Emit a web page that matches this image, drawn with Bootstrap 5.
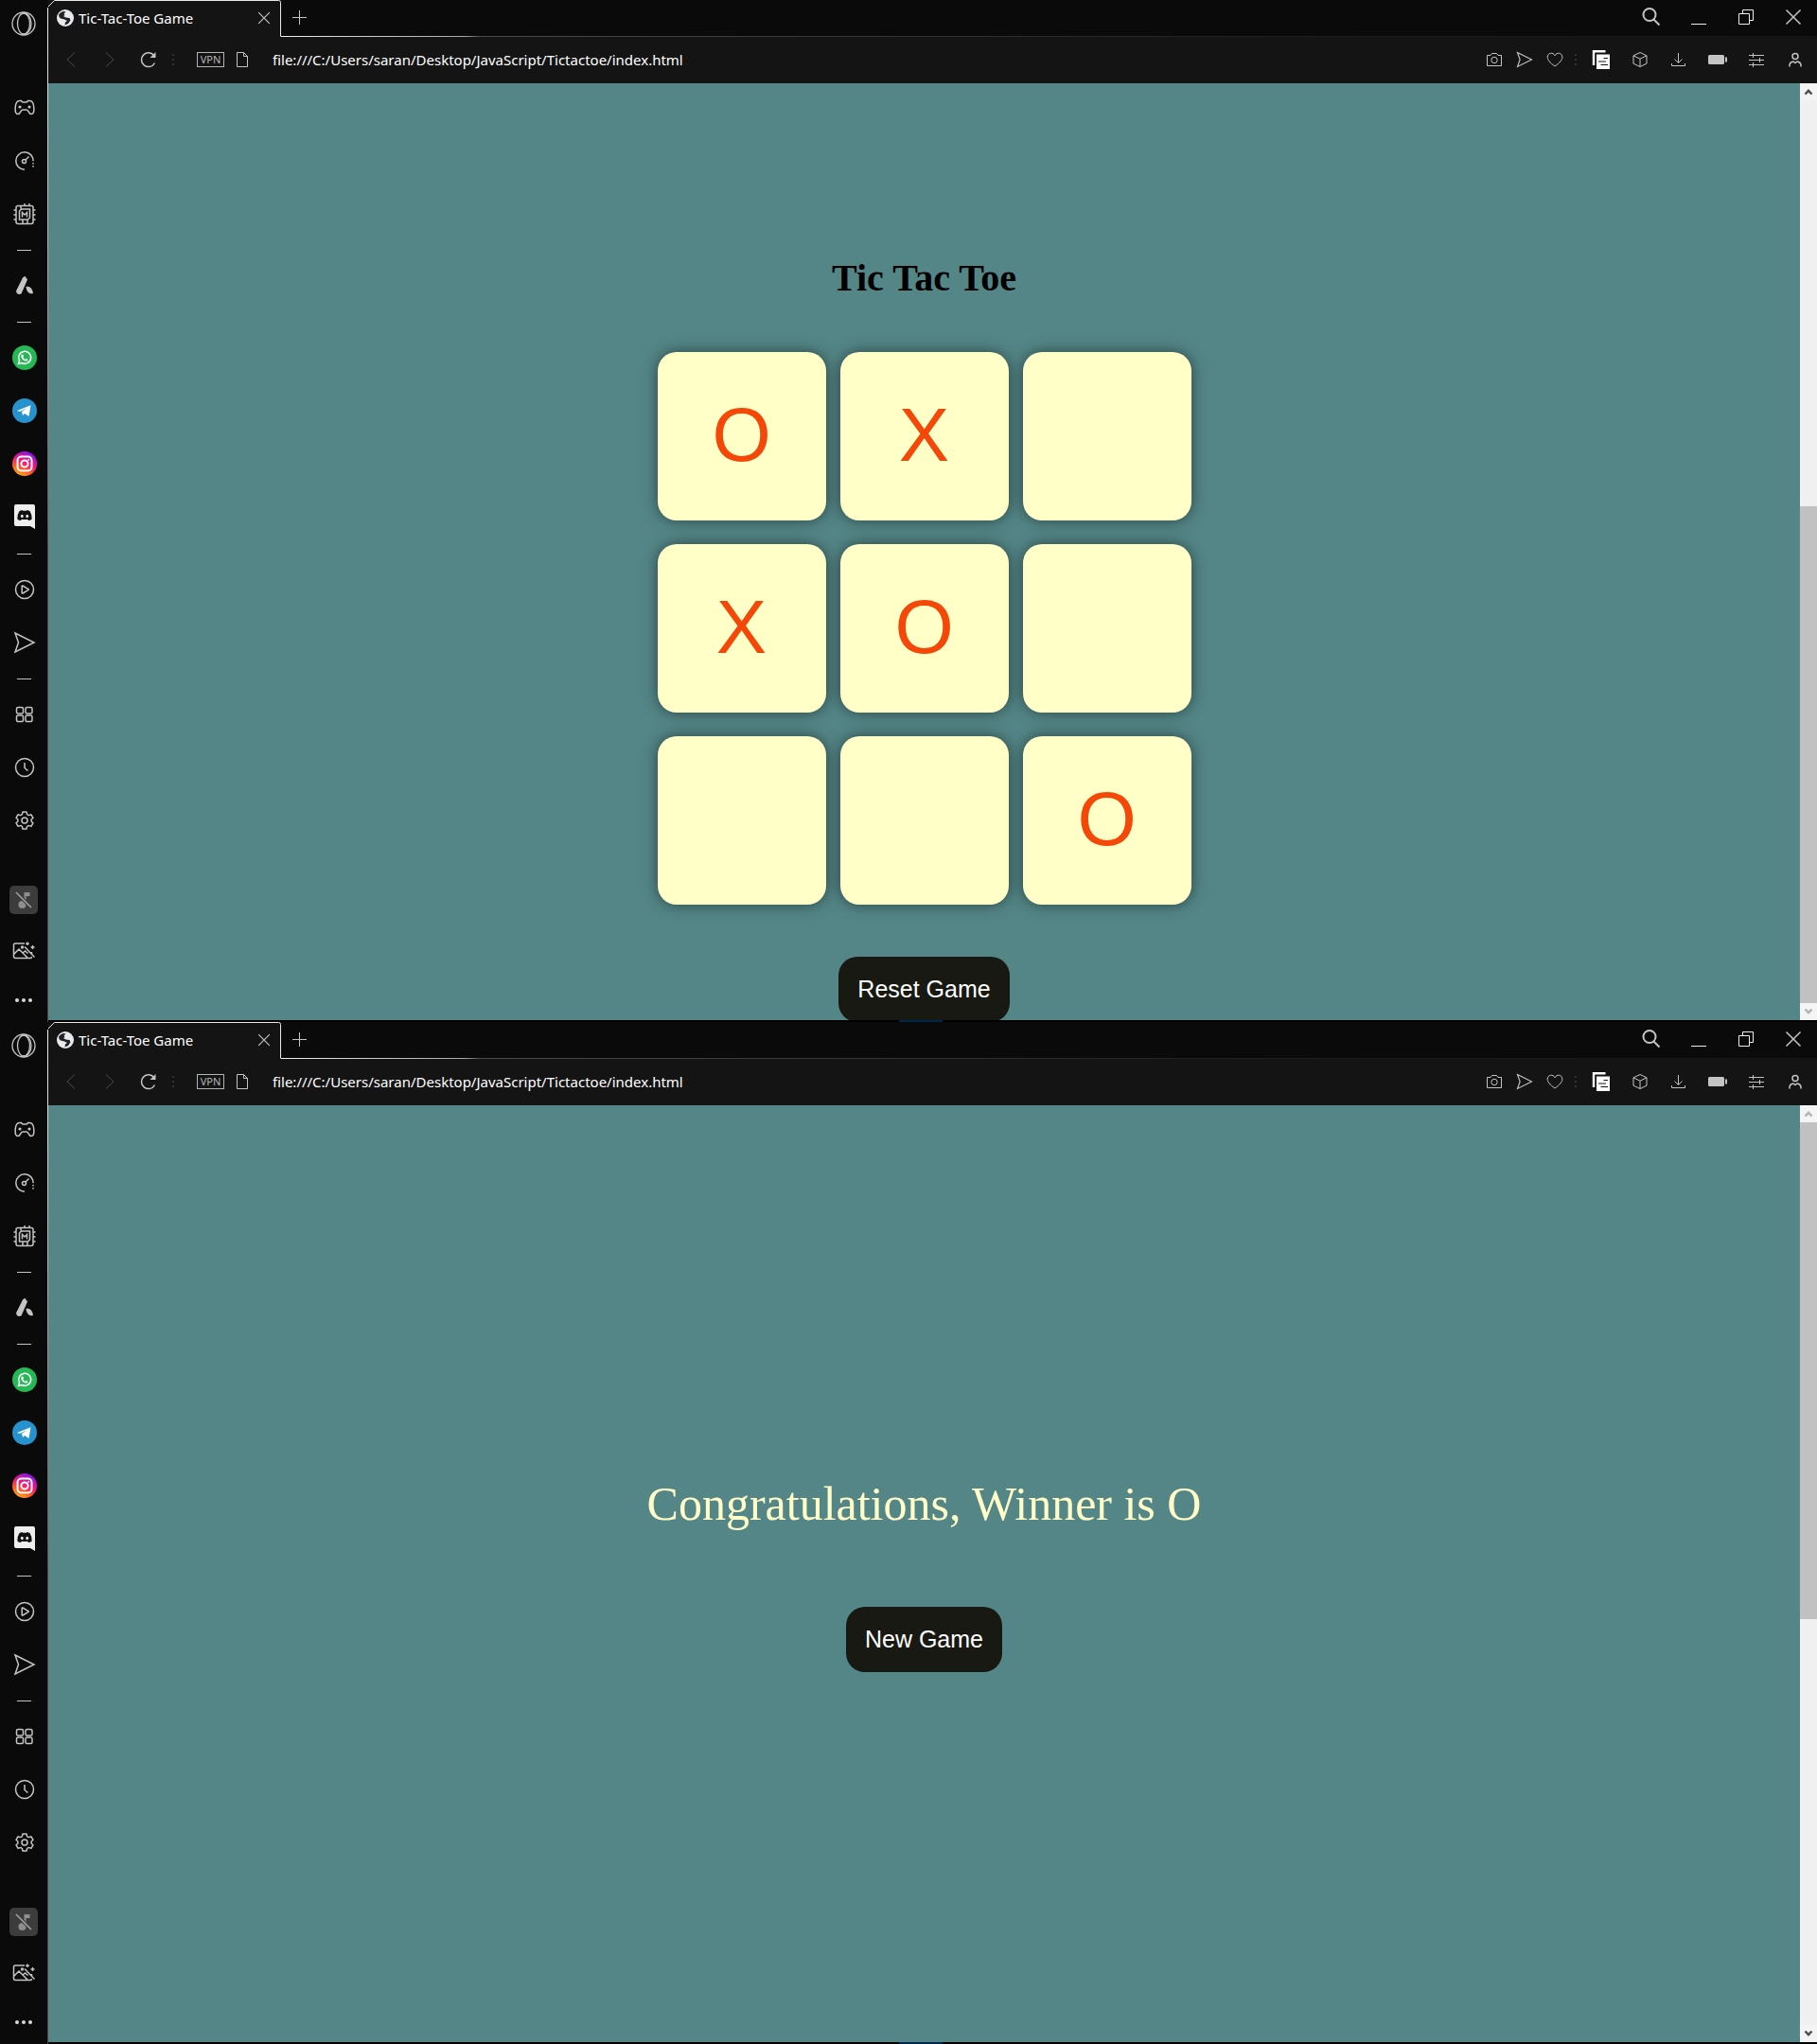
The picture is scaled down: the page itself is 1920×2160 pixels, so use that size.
<!DOCTYPE html>
<html lang="en">
<head>
<meta charset="utf-8">
<meta name="viewport" content="width=device-width, initial-scale=1">
<title>Tic-Tac-Toe Game</title>
<link href="https://cdn.jsdelivr.net/npm/bootstrap@5.3.0/dist/css/bootstrap.min.css" rel="stylesheet">
<style>
  body { background: #0a0a0a; font-family: "Noto Sans", "Open Sans", sans-serif; }
  .screen { height: 50vh; background: #0a0a0a; }
  svg { display: block; fill: none; stroke: #c4c4c4; stroke-width: 1.5; }
  .plain { background: none; border: 0; padding: 0; display: flex; align-items: center; justify-content: center; }

  .side { width: 50px; flex: none; padding-bottom: 1px; }
  .side .brand { width: 50px; height: 50px; margin-bottom: 36px; }
  .side .tool { width: 50px; height: 56px; flex: none; padding-left: 1px; }
  .side .rule { height: 20px; display: flex; align-items: center; justify-content: center; }
  .side .rule::before { content: ""; width: 15px; height: 1px; background: #c4c4c4; }
  .side .social { padding-bottom: 1px; }
  .side .low { gap: 8px; }
  .side .low .tool { height: 45px; padding-left: 0; }
  .side .muted-box { width: 30px; height: 30px; border-radius: 5px; background: #3c3c3c; }
  .edge { width: 1px; flex: none; margin-top: 8px; background: linear-gradient(#f2f2f2, #b0a8a8 25%, #4d4444 55%, #4d4444); }

  .tabs { height: 39px; flex: none; }
  .tab { width: 246px; background: #141414; padding: 0 0 2px 9px; gap: 5px; color: #fff; font-size: 15px; line-height: 20px; }
  .tab .outline { position: absolute; left: -1px; top: 0; stroke: #e8e8e8; stroke-width: 1; }
  .tab .plain { width: 36px; height: 37px; }
  .strip { border-bottom: 1px solid; border-image: linear-gradient(90deg, #f0f0f0, #a8a8a8 12%, #4a4a4a 13%, #1a1a1a 70%, #141414) 1; }
  .strip .plain { width: 50px; height: 36px; }
  .strip .plain.add { width: 38px; }
  .bar { height: 49px; flex: none; background: #141414; padding: 0 3px 2px; }
  .bar .nav-b { width: 41px; height: 46px; }
  .bar .act-b { width: 32px; height: 46px; }
  .bar .dots { width: 12px; display: flex; justify-content: center; }
  .vpn { width: 29px; height: 16px; border: 1px solid #b4b4b4; color: #b4b4b4; font-size: 11px; line-height: 14px; text-align: center; margin: 0 12px 0 19px; }
  .address { background: none; border: 0; outline: 0; color: #fff; font-size: 15px; line-height: 20px; height: 30px; padding: 0; margin-left: 25px; }

  .site { background: #548687; }
  .scroll { width: 18px; flex: none; background: #f0f0f0; }
  .scroll .plain { height: 18px; flex: none; background: #f4f4f4; }
  .scroll .thumb { height: 55%; background: #c1c1c1; }
  .scroll svg { stroke: #505050; stroke-width: 2.5; }
  .scroll :disabled svg { stroke: #b4b4b4; }
  .foot { height: 2px; flex: none; background: #000; }
  .foot::before { content: ""; display: block; width: 46px; height: 2px; margin-left: 899px; background: #00284d; }

  .game { padding-top: 180px; }
  .game h1 { font: bold 40px/52px "Liberation Serif", serif; color: #000; margin: 0 0 52px; }
  .board { display: grid; grid-template-columns: repeat(3, 178px); gap: 25px 15px; margin-bottom: 55px; }
  .cell { height: 178px; border: 0; border-radius: 20px; background: #ffffc7; color: #f44708; box-shadow: 0 0 16px rgba(0, 0, 0, .5); font: 80px/92px "Liberation Sans", Arial, sans-serif; padding: 0 0 2px; }
  .action { font: 25px/29px "Liberation Sans", Arial, sans-serif; color: #fff; background: #191913; border: 0; border-radius: 20px; padding: 20px; }
  .result { gap: 80px; }
  .result p { font: 50px/58px "Liberation Serif", serif; color: #ffffc7; margin: 0; }
</style>
<script src="https://cdn.jsdelivr.net/npm/bootstrap@5.3.0/dist/js/bootstrap.bundle.min.js"></script>
</head>
<body>
<svg width="0" height="0" class="position-absolute" aria-hidden="true">
  <defs>
    <linearGradient id="insta" x1="0.1" y1="1" x2=".6" y2="0"><stop offset="0" stop-color="#ffc02c"/><stop offset=".3" stop-color="#ff6a1c"/><stop offset=".6" stop-color="#f2187a"/><stop offset="1" stop-color="#8a16e8"/></linearGradient>
  </defs>
  <symbol id="opera" viewBox="0 0 26 26"><g stroke-width="1.300"><circle cx="13" cy="13" r="12"/><ellipse cx="13" cy="13" rx="6.500" ry="11"/><path d="M12 1.500c5.500 0 9 5 9 11.500s-3.500 11.500-9 11.500"/></g></symbol>
  <symbol id="pad" viewBox="0 0 22 18"><path d="M5.500 1.500h2q1 1.500 2 1.500h3q1 0 2-1.500h2c3 0 4 3 4.300 7 .3 4.500-.3 7-2.800 7-3 0-2.500-4.500-5-4.500H9c-2.500 0-2 4.500-5 4.500-2.500 0-3.100-2.500-2.800-7 .3-4 1.300-7 4.300-7z"/><circle cx="6" cy="8" r=".8"/><circle cx="16" cy="8" r=".8"/></symbol>
  <symbol id="gauge" viewBox="0 0 22 22"><path d="M11 20.200a9.200 9.200 0 1 1 9.200-9"/><path d="M20 13v1.500M20 16v1.500"/><circle cx="10.500" cy="11.500" r="2"/><path d="M12 10l3.500-3.500"/></symbol>
  <symbol id="chip" viewBox="0 0 26 26"><rect x="4" y="4.500" width="18" height="19" rx="2"/><path d="M12 8h6.500v9l-2 2H7.500V10l2-2zM1.500 9H4M1.500 14H4M1.500 19H4M22 9h2.500M22 14h2.500M22 19h2.500M9 4.500v3M13 2v2.500M18 2v2.500M11 19v4M16 19v4M10.500 16.500v-5l2.500 2.500 2.500-2.500v5"/></symbol>
  <symbol id="aria" viewBox="0 0 22 22"><path d="M11.500 1l2.500 3.500L7.500 19.500q-5 1.500-5.500-3L9 2.500q1-1.500 2.500-1.500zM12.500 12c4-1 7 2 7.500 7-4 1.500-7-2-7.500-7z" fill="#c4c4c4" stroke="none"/></symbol>
  <symbol id="whats" viewBox="0 0 26 26"><circle cx="13" cy="13" r="13" fill="#25b955" stroke="none"/><path d="M6.500 19.500l1-3.500a6.500 6.500 0 1 1 2.500 2.500z" stroke="#fff"/><path d="M10.200 9.500l1.300.3.600 1.700-.7.900c.5 1.200 1.200 1.900 2.400 2.400l.9-.8 1.700.8c.2 1.700-1.400 2-2.500 1.700-2.500-.6-4.300-2.700-4.600-4.800-.1-1 .3-1.800.9-2.200z" fill="#fff" stroke="none"/></symbol>
  <symbol id="tele" viewBox="0 0 26 26"><circle cx="13" cy="13" r="13" fill="#2692ce" stroke="none"/><path d="M5 13L19.500 7.200 17.500 19l-4.500-3-2 2-1-4 6-4-8 4z" fill="#fff" stroke="none"/></symbol>
  <symbol id="insta-i" viewBox="0 0 26 26"><circle cx="13" cy="13" r="13" fill="url(#insta)" stroke="none"/><g stroke="#fff" stroke-width="2"><rect x="5.500" y="5.500" width="15" height="15" rx="4"/><circle cx="13" cy="13" r="3.600"/></g><circle cx="17.300" cy="8.700" r="1" fill="#fff" stroke="none"/></symbol>
  <symbol id="disc" viewBox="0 0 24 26"><path d="M3 0h18q2 0 2 2v24l-5-3H3q-2 0-2-2V2q0-2 2-2z" fill="#eee" stroke="none"/><path d="M6.500 7l3-1 .5.800h4l.5-.8 3 1q2.500 4 2.200 8.500-1.700 1.500-3.700 1.500l-1-1.200q-3 .6-6 0l-1 1.200q-2 0-3.700-1.500Q4 11 6.500 7z" fill="#111" stroke="none"/><g fill="#eee" stroke="none"><ellipse cx="9.300" cy="12.400" rx="1.400" ry="1.600"/><ellipse cx="14.700" cy="12.400" rx="1.400" ry="1.600"/></g></symbol>
  <symbol id="play" viewBox="0 0 22 22"><circle cx="11" cy="11" r="9.500"/><path d="M8.200 7.500q0-.8.800-.5l6 3.500q.6.500 0 1l-6 3.500q-.8.300-.8-.5z"/></symbol>
  <symbol id="send" viewBox="0 0 24 24"><path d="M2 2l20 10L2 22l3.500-10z"/></symbol>
  <symbol id="grid4" viewBox="0 0 20 18"><rect x="1.500" y="1.500" width="7" height="6.500" rx="1.500"/><rect x="11" y="1.500" width="7" height="6.500" rx="1.500"/><rect x="1.500" y="10" width="7" height="6.500" rx="1.500"/><rect x="11" y="10" width="7" height="6.500" rx="1.500"/></symbol>
  <symbol id="clock" viewBox="0 0 22 22"><circle cx="11" cy="11" r="9.500"/><path d="M11 6v5.500l3.500 3"/></symbol>
  <symbol id="gear" viewBox="0 0 22 22"><path d="M9 2h4l.6 2.600 1.800 1 2.600-.8 2 3.500-1.900 1.700v2l1.900 1.700-2 3.500-2.600-.8-1.800 1L13 20H9l-.6-2.600-1.800-1-2.600.8-2-3.500L3.900 12v-2L2 8.300l2-3.500 2.600.8 1.800-1z" stroke-linejoin="round"/><circle cx="11" cy="11" r="3"/></symbol>
  <symbol id="mute" viewBox="0 0 22 22"><g fill="#8e8e8e" stroke="none"><circle cx="9.500" cy="16" r="4"/><path d="M11.500 3h6v4h-4v9h-2z"/></g><path d="M3 3l16 16" stroke="#3c3c3c" stroke-width="3.500"/><path d="M3 3l16 16" stroke="#a4a4a4"/></symbol>
  <symbol id="pic" viewBox="0 0 24 22"><path d="M13 4H3q-1.500 0-1.500 1.500v12Q1.500 19.500 3 19.500h16q1.500 0 1.500-1.500M20.500 13v2M2 15l5-5 9 9M11 14l2.500-2 3 2.500M13 7.500L23.500 18.500M16 2.500v3.500M14.200 4.200h3.600M21.500 6v4M19.500 8h4"/><circle cx="10.500" cy="8" r="1"/></symbol>
  <symbol id="more" viewBox="0 0 20 6"><g fill="#d8d8d8" stroke="none"><circle cx="3" cy="3" r="2"/><circle cx="10" cy="3" r="2"/><circle cx="17" cy="3" r="2"/></g></symbol>
  <symbol id="globe" viewBox="0 0 18 18"><circle cx="9" cy="9" r="9" fill="#e8eaed" stroke="none"/><path d="M2 5.500q1.500-2.500 4.500-3.500l3 .5-2 2 1 1.500-1.500 1 2.500 1.500 4 .5 1 2.500-2.500 3.500-3.500 1.500.5-3 2-1.500-3-1.500L4 9.500 2.500 8z" fill="#202124" stroke="none"/></symbol>
  <symbol id="cross" viewBox="0 0 18 18"><path d="M1.500 1.500l15 15M16.500 1.500l-15 15"/></symbol>
  <symbol id="plus" viewBox="0 0 16 16"><path d="M8.500 1v15M1 8.500h15" stroke-width="1"/></symbol>
  <symbol id="find" viewBox="0 0 20 20"><circle cx="8" cy="7.500" r="6.500" stroke-width="2"/><path d="M12.500 12.500l6 6" stroke-width="2"/></symbol>
  <symbol id="mini" viewBox="0 0 18 18"><path d="M1 16.500h16" stroke="#eee" stroke-width="1"/></symbol>
  <symbol id="rest" viewBox="0 0 18 18"><path d="M1.500 5.500h11v11h-11zM5.500 5.500v-4h11v11h-4" stroke="#eee" stroke-width="1"/></symbol>
  <symbol id="back" viewBox="0 0 12 18"><path d="M10 1.500L2 9l8 7.500" stroke="#4a4a4a" stroke-width="1"/></symbol>
  <symbol id="fwd" viewBox="0 0 12 18"><path d="M2 1.500L10 9l-8 7.500" stroke="#4a4a4a" stroke-width="1"/></symbol>
  <symbol id="reload" viewBox="0 0 18 18"><path d="M15.500 12.500A7.400 7.400 0 1 1 15 5"/><path d="M16.500 1v6h-6z" fill="#c4c4c4" stroke="none"/></symbol>
  <symbol id="sep" viewBox="0 0 4 14"><path d="M2 1v12" stroke="#3a3a3a" stroke-width="1.500" stroke-dasharray="2 3"/></symbol>
  <symbol id="page" viewBox="0 0 14 18"><path d="M1.500 1.500h7l4 4v11h-11zM8.500 1.500v4h4" stroke-width="1"/></symbol>
  <symbol id="cam" viewBox="0 0 18 16"><path d="M1.500 3.500H5l1.500-2h5l1.500 2h3.500v11h-15z" stroke-width="1"/><circle cx="9" cy="8.500" r="3.200" stroke-width="1"/></symbol>
  <symbol id="heart" viewBox="0 0 18 16"><path d="M9 15C4 11.500 1.200 8.500 1.200 5.200c0-4.500 6-5.500 7.800-1.400 1.800-4.100 7.800-3.100 7.800 1.400C16.800 8.500 14 11.500 9 15z" stroke-width="1"/></symbol>
  <symbol id="docs" viewBox="0 0 20 20"><path d="M2 16V1.200h12.500" stroke="#fff" stroke-width="2.400"/><path d="M5 4.500h14V20H5z" fill="#fff" stroke="none"/><path d="M12.500 8.500h4.500M7 12h8M9.500 15.500H17" stroke="#141414" stroke-width="1.200"/></symbol>
  <symbol id="cube" viewBox="0 0 18 18"><path d="M9 1.500l7 3.300v8.400l-7 3.300-7-3.300V4.800zM2 4.800l7 3.400 7-3.400M9 8.200v8.300" stroke-width="1"/></symbol>
  <symbol id="down" viewBox="0 0 18 16"><path d="M8.500 1v10M4.500 7.500l4 4 4-4M1.500 12v2.500h14V12" stroke-width="1"/></symbol>
  <symbol id="batt" viewBox="0 0 20 12"><path d="M1.500 1h14q1.500 0 1.500 1.500v7q0 1.500-1.500 1.500h-14Q0 11 0 9.500v-7Q0 1 1.500 1zM18 3.500h2v5h-2z" fill="#c4c4c4" stroke="none"/></symbol>
  <symbol id="tune" viewBox="0 0 18 16"><path d="M1 3.500h16M1 8.500h16M1 13.500h16M5.500 1v5M12.500 6v5M5.500 11v5" stroke-width="1"/></symbol>
  <symbol id="user" viewBox="0 0 16 16"><circle cx="8" cy="4.500" r="3"/><path d="M2 15.500v-2q.5-3 4-3.500l2 1.500L10 10q3.500.5 4 3.500v2"/></symbol>
  <symbol id="up" viewBox="0 0 10 8"><path d="M1.500 6.500L5 2.800l3.500 3.700"/></symbol>
  <symbol id="dn" viewBox="0 0 10 8"><path d="M1.500 1.500L5 5.200l3.500-3.700"/></symbol>
  <symbol id="edge-tab" viewBox="0 0 247 39"><path d="M.5 8v-.5l7-7h237q2 0 2 2v36"/></symbol>
</svg>

<main class="vh-100 overflow-hidden">
  <section class="screen d-flex overflow-hidden" aria-label="Game board window">
    <nav class="side d-flex flex-column" aria-label="Sidebar">
      <button class="plain brand" aria-label="Menu"><svg width="26" height="26"><use href="#opera"/></svg></button>
      <div>
        <button class="plain tool" aria-label="Corner"><svg width="22" height="18"><use href="#pad"/></svg></button>
        <button class="plain tool" aria-label="GX Control"><svg width="22" height="22"><use href="#gauge"/></svg></button>
        <button class="plain tool" aria-label="Mods"><svg width="26" height="26"><use href="#chip"/></svg></button>
      </div>
      <div class="rule"></div>
      <button class="plain tool" aria-label="Aria"><svg width="22" height="22"><use href="#aria"/></svg></button>
      <div class="rule"></div>
      <div class="social">
        <button class="plain tool" aria-label="WhatsApp"><svg width="26" height="26"><use href="#whats"/></svg></button>
        <button class="plain tool" aria-label="Telegram"><svg width="26" height="26"><use href="#tele"/></svg></button>
        <button class="plain tool" aria-label="Instagram"><svg width="26" height="26"><use href="#insta-i"/></svg></button>
        <button class="plain tool" aria-label="Discord"><svg width="24" height="26"><use href="#disc"/></svg></button>
      </div>
      <div class="rule"></div>
      <div>
        <button class="plain tool" aria-label="Player"><svg width="22" height="22"><use href="#play"/></svg></button>
        <button class="plain tool" aria-label="My Flow"><svg width="24" height="24"><use href="#send"/></svg></button>
      </div>
      <div class="rule"></div>
      <div>
        <button class="plain tool" aria-label="Speed Dial"><svg width="20" height="18"><use href="#grid4"/></svg></button>
        <button class="plain tool" aria-label="History"><svg width="22" height="22"><use href="#clock"/></svg></button>
        <button class="plain tool" aria-label="Settings"><svg width="22" height="22"><use href="#gear"/></svg></button>
      </div>
      <div class="low mt-auto d-flex flex-column">
        <button class="plain tool" aria-label="Music muted"><span class="plain muted-box"><svg width="22" height="22"><use href="#mute"/></svg></span></button>
        <button class="plain tool" aria-label="Wallpaper"><svg width="24" height="22"><use href="#pic"/></svg></button>
        <button class="plain tool" aria-label="More"><svg width="20" height="6"><use href="#more"/></svg></button>
      </div>
    </nav>
    <div class="edge"></div>
    <div class="flex-grow-1 d-flex flex-column overflow-hidden">
      <header class="tabs d-flex">
        <div class="tab position-relative d-flex align-items-center">
          <svg class="outline" width="247" height="39"><use href="#edge-tab"/></svg>
          <svg width="18" height="18"><use href="#globe"/></svg>
          <span class="flex-grow-1">Tic-Tac-Toe Game</span>
          <button class="plain" aria-label="Close tab"><svg width="14" height="14"><use href="#cross"/></svg></button>
        </div>
        <div class="strip flex-grow-1 d-flex">
          <button class="plain add me-auto" aria-label="New tab"><svg width="16" height="16"><use href="#plus"/></svg></button>
          <button class="plain" aria-label="Search tabs"><svg width="20" height="20"><use href="#find"/></svg></button>
          <button class="plain" aria-label="Minimize"><svg width="18" height="18"><use href="#mini"/></svg></button>
          <button class="plain" aria-label="Restore"><svg width="18" height="18"><use href="#rest"/></svg></button>
          <button class="plain" aria-label="Close window"><svg width="18" height="18"><use href="#cross"/></svg></button>
        </div>
      </header>
      <div class="bar d-flex align-items-center">
        <button class="plain nav-b" aria-label="Back"><svg width="12" height="18"><use href="#back"/></svg></button>
        <button class="plain nav-b" aria-label="Forward"><svg width="12" height="18"><use href="#fwd"/></svg></button>
        <button class="plain nav-b" aria-label="Reload"><svg width="18" height="18"><use href="#reload"/></svg></button>
        <span class="dots"><svg width="4" height="14"><use href="#sep"/></svg></span>
        <span class="vpn">VPN</span>
        <svg width="14" height="18"><use href="#page"/></svg>
        <input class="address flex-grow-1" type="text" aria-label="Address" value="file:///C:/Users/saran/Desktop/JavaScript/Tictactoe/index.html">
        <button class="plain act-b" aria-label="Snapshot"><svg width="18" height="16"><use href="#cam"/></svg></button>
        <button class="plain act-b" aria-label="Send to My Flow"><svg width="18" height="18"><use href="#send"/></svg></button>
        <button class="plain act-b" aria-label="Bookmark"><svg width="18" height="16"><use href="#heart"/></svg></button>
        <span class="dots"><svg width="4" height="14"><use href="#sep"/></svg></span>
        <button class="plain nav-b" aria-label="Reader extension"><svg width="20" height="20"><use href="#docs"/></svg></button>
        <button class="plain nav-b" aria-label="Extensions"><svg width="18" height="18"><use href="#cube"/></svg></button>
        <button class="plain nav-b" aria-label="Downloads"><svg width="18" height="16"><use href="#down"/></svg></button>
        <button class="plain nav-b" aria-label="Battery saver"><svg width="20" height="12"><use href="#batt"/></svg></button>
        <button class="plain nav-b" aria-label="Easy setup"><svg width="18" height="16"><use href="#tune"/></svg></button>
        <button class="plain nav-b" aria-label="Profile"><svg width="16" height="16"><use href="#user"/></svg></button>
      </div>
      <div class="d-flex flex-grow-1 overflow-hidden">
        <div class="site game flex-grow-1 d-flex flex-column align-items-center overflow-hidden">
          <h1>Tic Tac Toe</h1>
          <div class="board">
            <button class="cell">O</button><button class="cell">X</button><button class="cell" aria-label="Empty"></button>
            <button class="cell">X</button><button class="cell">O</button><button class="cell" aria-label="Empty"></button>
            <button class="cell" aria-label="Empty"></button><button class="cell" aria-label="Empty"></button><button class="cell">O</button>
          </div>
          <button class="action">Reset Game</button>
        </div>
        <div class="scroll d-flex flex-column">
          <button class="plain" aria-label="Scroll up"><svg width="10" height="8"><use href="#up"/></svg></button>
          <div class="flex-grow-1 d-flex flex-column justify-content-end"><div class="thumb"></div></div>
          <button class="plain" aria-label="Scroll down" disabled><svg width="10" height="8"><use href="#dn"/></svg></button>
        </div>
      </div>
      <div class="foot"></div>
    </div>
  </section>

  <section class="screen d-flex overflow-hidden" aria-label="Winner window">
    <nav class="side d-flex flex-column" aria-label="Sidebar">
      <button class="plain brand" aria-label="Menu"><svg width="26" height="26"><use href="#opera"/></svg></button>
      <div>
        <button class="plain tool" aria-label="Corner"><svg width="22" height="18"><use href="#pad"/></svg></button>
        <button class="plain tool" aria-label="GX Control"><svg width="22" height="22"><use href="#gauge"/></svg></button>
        <button class="plain tool" aria-label="Mods"><svg width="26" height="26"><use href="#chip"/></svg></button>
      </div>
      <div class="rule"></div>
      <button class="plain tool" aria-label="Aria"><svg width="22" height="22"><use href="#aria"/></svg></button>
      <div class="rule"></div>
      <div class="social">
        <button class="plain tool" aria-label="WhatsApp"><svg width="26" height="26"><use href="#whats"/></svg></button>
        <button class="plain tool" aria-label="Telegram"><svg width="26" height="26"><use href="#tele"/></svg></button>
        <button class="plain tool" aria-label="Instagram"><svg width="26" height="26"><use href="#insta-i"/></svg></button>
        <button class="plain tool" aria-label="Discord"><svg width="24" height="26"><use href="#disc"/></svg></button>
      </div>
      <div class="rule"></div>
      <div>
        <button class="plain tool" aria-label="Player"><svg width="22" height="22"><use href="#play"/></svg></button>
        <button class="plain tool" aria-label="My Flow"><svg width="24" height="24"><use href="#send"/></svg></button>
      </div>
      <div class="rule"></div>
      <div>
        <button class="plain tool" aria-label="Speed Dial"><svg width="20" height="18"><use href="#grid4"/></svg></button>
        <button class="plain tool" aria-label="History"><svg width="22" height="22"><use href="#clock"/></svg></button>
        <button class="plain tool" aria-label="Settings"><svg width="22" height="22"><use href="#gear"/></svg></button>
      </div>
      <div class="low mt-auto d-flex flex-column">
        <button class="plain tool" aria-label="Music muted"><span class="plain muted-box"><svg width="22" height="22"><use href="#mute"/></svg></span></button>
        <button class="plain tool" aria-label="Wallpaper"><svg width="24" height="22"><use href="#pic"/></svg></button>
        <button class="plain tool" aria-label="More"><svg width="20" height="6"><use href="#more"/></svg></button>
      </div>
    </nav>
    <div class="edge"></div>
    <div class="flex-grow-1 d-flex flex-column overflow-hidden">
      <header class="tabs d-flex">
        <div class="tab position-relative d-flex align-items-center">
          <svg class="outline" width="247" height="39"><use href="#edge-tab"/></svg>
          <svg width="18" height="18"><use href="#globe"/></svg>
          <span class="flex-grow-1">Tic-Tac-Toe Game</span>
          <button class="plain" aria-label="Close tab"><svg width="14" height="14"><use href="#cross"/></svg></button>
        </div>
        <div class="strip flex-grow-1 d-flex">
          <button class="plain add me-auto" aria-label="New tab"><svg width="16" height="16"><use href="#plus"/></svg></button>
          <button class="plain" aria-label="Search tabs"><svg width="20" height="20"><use href="#find"/></svg></button>
          <button class="plain" aria-label="Minimize"><svg width="18" height="18"><use href="#mini"/></svg></button>
          <button class="plain" aria-label="Restore"><svg width="18" height="18"><use href="#rest"/></svg></button>
          <button class="plain" aria-label="Close window"><svg width="18" height="18"><use href="#cross"/></svg></button>
        </div>
      </header>
      <div class="bar d-flex align-items-center">
        <button class="plain nav-b" aria-label="Back"><svg width="12" height="18"><use href="#back"/></svg></button>
        <button class="plain nav-b" aria-label="Forward"><svg width="12" height="18"><use href="#fwd"/></svg></button>
        <button class="plain nav-b" aria-label="Reload"><svg width="18" height="18"><use href="#reload"/></svg></button>
        <span class="dots"><svg width="4" height="14"><use href="#sep"/></svg></span>
        <span class="vpn">VPN</span>
        <svg width="14" height="18"><use href="#page"/></svg>
        <input class="address flex-grow-1" type="text" aria-label="Address" value="file:///C:/Users/saran/Desktop/JavaScript/Tictactoe/index.html">
        <button class="plain act-b" aria-label="Snapshot"><svg width="18" height="16"><use href="#cam"/></svg></button>
        <button class="plain act-b" aria-label="Send to My Flow"><svg width="18" height="18"><use href="#send"/></svg></button>
        <button class="plain act-b" aria-label="Bookmark"><svg width="18" height="16"><use href="#heart"/></svg></button>
        <span class="dots"><svg width="4" height="14"><use href="#sep"/></svg></span>
        <button class="plain nav-b" aria-label="Reader extension"><svg width="20" height="20"><use href="#docs"/></svg></button>
        <button class="plain nav-b" aria-label="Extensions"><svg width="18" height="18"><use href="#cube"/></svg></button>
        <button class="plain nav-b" aria-label="Downloads"><svg width="18" height="16"><use href="#down"/></svg></button>
        <button class="plain nav-b" aria-label="Battery saver"><svg width="20" height="12"><use href="#batt"/></svg></button>
        <button class="plain nav-b" aria-label="Easy setup"><svg width="18" height="16"><use href="#tune"/></svg></button>
        <button class="plain nav-b" aria-label="Profile"><svg width="16" height="16"><use href="#user"/></svg></button>
      </div>
      <div class="d-flex flex-grow-1 overflow-hidden">
        <div class="site result flex-grow-1 d-flex flex-column align-items-center justify-content-center">
          <p>Congratulations, Winner is O</p>
          <button class="action">New Game</button>
        </div>
        <div class="scroll d-flex flex-column">
          <button class="plain" aria-label="Scroll up" disabled><svg width="10" height="8"><use href="#up"/></svg></button>
          <div class="flex-grow-1"><div class="thumb"></div></div>
          <button class="plain" aria-label="Scroll down"><svg width="10" height="8"><use href="#dn"/></svg></button>
        </div>
      </div>
      <div class="foot"></div>
    </div>
  </section>
</main>
</body>
</html>
